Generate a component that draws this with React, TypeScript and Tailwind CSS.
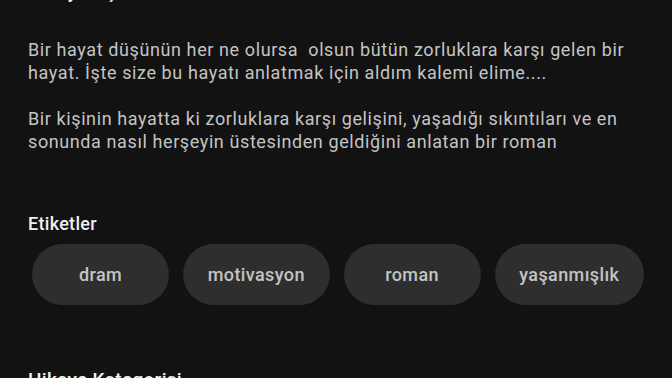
import React from "react";

const tags = ["dram", "motivasyon", "roman", "yaşanmışlık"];

export default function App() {
  return (
    <div
      className="h-[378px] w-[672px] overflow-hidden bg-[#121212]"
      style={{ fontFamily: "Roboto, 'Noto Sans', sans-serif" }}
    >
      <div className="flex flex-col px-[28px]">
        <h2 className="mt-[-20px] text-[19px] font-medium leading-[24px] tracking-[0.3px] text-[#eeeeee]">
          Hikaye Açıklaması
        </h2>
        <p className="mt-[34px] whitespace-pre-wrap text-[18px] leading-[23px] tracking-[0.6px] text-[#c4c4c4]">
          {"Bir hayat düşünün her ne olursa  olsun bütün zorluklara karşı gelen bir\nhayat. İşte size bu hayatı anlatmak için aldım kalemi elime....\n\nBir kişinin hayatta ki zorluklara karşı gelişini, yaşadığı sıkıntıları ve en\nsonunda nasıl herşeyin üstesinden geldiğini anlatan bir roman"}
        </p>
        <h3 className="mt-[59px] text-[18px] font-medium leading-[24px] tracking-[0.3px] text-[#f0f0f0]">
          Etiketler
        </h3>
        <div className="mt-[8px] flex gap-[14px] pl-[4px]">
          {tags.map((t) => (
            <div
              key={t}
              className="flex h-[61px] min-w-[137px] items-center justify-center rounded-full bg-[#2e2e2e] px-[26px] text-[18px] font-medium tracking-[0.4px] text-[#c4c4c4]"
            >
              {t}
            </div>
          ))}
        </div>
        <h3 className="mt-[63px] text-[19px] font-medium leading-[24px] tracking-[0.3px] text-[#f0f0f0]">
          Hikaye Kategorisi
        </h3>
      </div>
    </div>
  );
}
